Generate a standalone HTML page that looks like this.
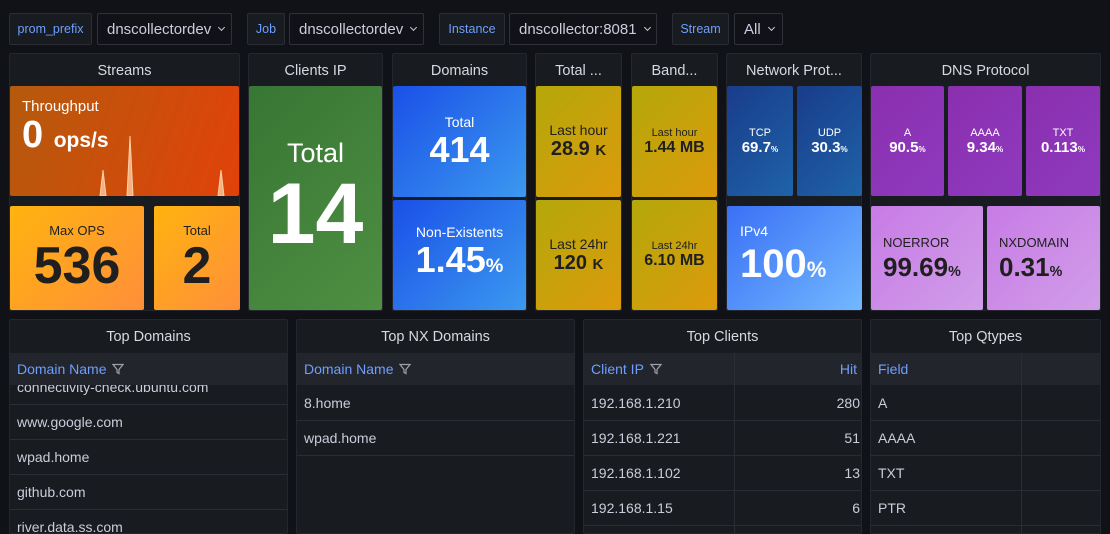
<!DOCTYPE html>
<html><head><meta charset="utf-8"><style>
*{box-sizing:border-box;margin:0;padding:0}
body{width:1110px;height:525px;background:#111217;font-family:"Liberation Sans",sans-serif;color:#ccccdc;position:relative;overflow:hidden}
.a{position:absolute}
.lbl{background:#181b1f;border:1px solid #2a2d33;color:#6e9fff;font-size:12.5px;display:flex;align-items:center;justify-content:center;border-radius:2px}
.dd{background:#111217;border:1px solid #2f323a;color:#ccccdc;font-size:15px;display:flex;align-items:center;padding-left:9px;border-radius:2px}
.dd:after{content:"";width:4px;height:4px;border-right:1.5px solid #ccc;border-bottom:1.5px solid #ccc;transform:rotate(45deg);margin-left:8px;margin-top:-4px}
.pn{background:#181b1f;border:1px solid #24272e;border-radius:2px}
.pt{position:absolute;left:0;right:0;top:0;height:33px;display:flex;align-items:center;justify-content:center;font-size:14.5px;color:#d8d9e0}
.t{position:absolute;border-radius:2px;text-align:center;color:#fff}
.c{display:flex;flex-direction:column;align-items:center;justify-content:center}
.dk{color:#1f1f1f}
small{font-size:0.55em}
.th{position:absolute;left:0;right:0;top:33px;height:32px;background:#22252b;color:#6e9fff;font-size:14px;display:flex;align-items:center;padding-left:7px}
.row{position:absolute;left:0;right:0;height:35px;border-top:1px solid #2a2d33;font-size:14px;color:#ccccdc;display:flex;align-items:center;padding-left:7px}
.fi{display:inline-block;width:12px;height:12px;margin-left:6px;vertical-align:middle}
</style></head><body>
<div class="a lbl" style="left:9px;top:13px;width:83px;height:32px">prom_prefix</div>
<div class="a dd" style="left:97px;top:13px;width:135px;height:32px">dnscollectordev</div>
<div class="a lbl" style="left:247px;top:13px;width:38px;height:32px">Job</div>
<div class="a dd" style="left:289px;top:13px;width:135px;height:32px">dnscollectordev</div>
<div class="a lbl" style="left:439px;top:13px;width:66px;height:32px">Instance</div>
<div class="a dd" style="left:509px;top:13px;width:148px;height:32px">dnscollector:8081</div>
<div class="a lbl" style="left:672px;top:13px;width:57px;height:32px">Stream</div>
<div class="a dd" style="left:734px;top:13px;width:49px;height:32px">All</div>

<div class="a pn" style="left:9px;top:53px;width:231px;height:258px"><div class="pt">Streams</div></div>
<div class="t" style="left:10px;top:86px;width:229px;height:110px;background:linear-gradient(110deg,#b45a0c,#e2420a);text-align:left;overflow:hidden">
<div style="position:absolute;left:12px;top:12px;font-size:15px">Throughput</div>
<div style="position:absolute;left:12px;top:28px;font-size:38px;font-weight:bold">0 <span style="font-size:21px">ops/s</span></div>
<svg class="a" style="left:0;top:0" width="229" height="110"><g fill="#f5b080" stroke="#ffd0a8" stroke-width="1"><path d="M90 110 L93 84 L96 110Z"/><path d="M117 110 L120 50 L123 110Z"/><path d="M208 110 L211 84 L214 110Z"/></g></svg>
</div>
<div class="t c dk" style="left:10px;top:206px;width:134px;height:104px;background:linear-gradient(135deg,#ffb30f,#ff8f3a)"><div style="font-size:13px">Max OPS</div><div style="font-size:52px;font-weight:bold;line-height:56px">536</div></div>
<div class="t c dk" style="left:154px;top:206px;width:86px;height:104px;background:linear-gradient(135deg,#ffb30f,#ff8f3a)"><div style="font-size:13px">Total</div><div style="font-size:52px;font-weight:bold;line-height:56px">2</div></div>

<div class="a pn" style="left:248px;top:53px;width:135px;height:258px"><div class="pt">Clients IP</div></div>
<div class="t c" style="left:249px;top:86px;width:133px;height:224px;background:linear-gradient(135deg,#377634,#4e8f42)"><div style="font-size:27px">Total</div><div style="font-size:86px;font-weight:bold;line-height:90px">14</div></div>

<div class="a pn" style="left:392px;top:53px;width:135px;height:258px"><div class="pt">Domains</div></div>
<div class="t c" style="left:393px;top:86px;width:133px;height:111px;background:linear-gradient(135deg,#1a50e8,#3c99ef)"><div style="font-size:14px">Total</div><div style="font-size:36px;font-weight:bold;line-height:40px">414</div></div>
<div class="t c" style="left:393px;top:200px;width:133px;height:110px;background:linear-gradient(135deg,#1a50e8,#3c99ef)"><div style="font-size:14px">Non-Existents</div><div style="font-size:36px;font-weight:bold;line-height:40px">1.45<small>%</small></div></div>

<div class="a pn" style="left:535px;top:53px;width:87px;height:258px"><div class="pt">Total ...</div></div>
<div class="t c dk" style="left:536px;top:86px;width:85px;height:111px;background:linear-gradient(135deg,#b4a80a,#dc9a0c)"><div style="font-size:14px">Last hour</div><div style="font-size:20px;font-weight:bold">28.9 <span style="font-size:15px">K</span></div></div>
<div class="t c dk" style="left:536px;top:200px;width:85px;height:110px;background:linear-gradient(135deg,#b4a80a,#dc9a0c)"><div style="font-size:14px">Last 24hr</div><div style="font-size:20px;font-weight:bold">120 <span style="font-size:15px">K</span></div></div>

<div class="a pn" style="left:631px;top:53px;width:87px;height:258px"><div class="pt">Band...</div></div>
<div class="t c dk" style="left:632px;top:86px;width:85px;height:111px;background:linear-gradient(135deg,#b4a80a,#dc9a0c)"><div style="font-size:11px">Last hour</div><div style="font-size:16px;font-weight:bold">1.44 MB</div></div>
<div class="t c dk" style="left:632px;top:200px;width:85px;height:110px;background:linear-gradient(135deg,#b4a80a,#dc9a0c)"><div style="font-size:11px">Last 24hr</div><div style="font-size:16px;font-weight:bold">6.10 MB</div></div>

<div class="a pn" style="left:726px;top:53px;width:136px;height:258px"><div class="pt">Network Prot...</div></div>
<div class="t c" style="left:727px;top:86px;width:66px;height:110px;background:linear-gradient(135deg,#193c8a,#1f63a8)"><div style="font-size:11px">TCP</div><div style="font-size:15px;font-weight:bold">69.7<small>%</small></div></div>
<div class="t c" style="left:797px;top:86px;width:65px;height:110px;background:linear-gradient(135deg,#193c8a,#1f63a8)"><div style="font-size:11px">UDP</div><div style="font-size:15px;font-weight:bold">30.3<small>%</small></div></div>
<div class="t" style="left:727px;top:206px;width:135px;height:104px;background:linear-gradient(135deg,#3a70f5,#72b8ff);text-align:left"><div style="position:absolute;left:13px;top:17px;font-size:14px">IPv4</div><div style="position:absolute;left:13px;top:36px;font-size:40px;font-weight:bold">100<small>%</small></div></div>

<div class="a pn" style="left:870px;top:53px;width:231px;height:258px"><div class="pt">DNS Protocol</div></div>
<div class="t c" style="left:871px;top:86px;width:73px;height:110px;background:linear-gradient(135deg,#8a2fae,#8f3abf)"><div style="font-size:11px">A</div><div style="font-size:15px;font-weight:bold">90.5<small>%</small></div></div>
<div class="t c" style="left:948px;top:86px;width:74px;height:110px;background:linear-gradient(135deg,#8a2fae,#8f3abf)"><div style="font-size:11px">AAAA</div><div style="font-size:15px;font-weight:bold">9.34<small>%</small></div></div>
<div class="t c" style="left:1026px;top:86px;width:74px;height:110px;background:linear-gradient(135deg,#8a2fae,#8f3abf)"><div style="font-size:11px">TXT</div><div style="font-size:15px;font-weight:bold">0.113<small>%</small></div></div>
<div class="t dk" style="left:871px;top:206px;width:112px;height:104px;background:linear-gradient(135deg,#c87be6,#d09de8);text-align:left"><div style="position:absolute;left:12px;top:29px;font-size:13px">NOERROR</div><div style="position:absolute;left:12px;top:46px;font-size:26px;font-weight:bold">99.69<small>%</small></div></div>
<div class="t dk" style="left:987px;top:206px;width:113px;height:104px;background:linear-gradient(135deg,#c87be6,#d09de8);text-align:left"><div style="position:absolute;left:12px;top:29px;font-size:13px">NXDOMAIN</div><div style="position:absolute;left:12px;top:46px;font-size:26px;font-weight:bold">0.31<small>%</small></div></div>

<div class="a pn" style="left:9px;top:319px;width:279px;height:215px;overflow:hidden"><div class="pt">Top Domains</div>
<div class="row" style="top:49px;border:none">connectivity-check.ubuntu.com</div>
<div class="th">Domain Name<svg class="fi" viewBox="0 0 12 12"><path d="M1 1.5h10L7 6.5v4L5 9.5v-3Z" fill="none" stroke="#9fa1a8" stroke-width="1.2"/></svg></div>
<div class="row" style="top:84px">www.google.com</div>
<div class="row" style="top:119px">wpad.home</div>
<div class="row" style="top:154px">github.com</div>
<div class="row" style="top:189px">river.data.ss.com</div>
</div>
<div class="a pn" style="left:296px;top:319px;width:279px;height:215px;overflow:hidden"><div class="pt">Top NX Domains</div>
<div class="th">Domain Name<svg class="fi" viewBox="0 0 12 12"><path d="M1 1.5h10L7 6.5v4L5 9.5v-3Z" fill="none" stroke="#9fa1a8" stroke-width="1.2"/></svg></div>
<div class="row" style="top:65px;border:none">8.home</div>
<div class="row" style="top:100px">wpad.home</div>
<div class="row" style="top:135px;height:1px"></div>
</div>
<div class="a pn" style="left:583px;top:319px;width:279px;height:215px;overflow:hidden"><div class="pt">Top Clients</div>
<div class="th">Client IP<svg class="fi" viewBox="0 0 12 12"><path d="M1 1.5h10L7 6.5v4L5 9.5v-3Z" fill="none" stroke="#9fa1a8" stroke-width="1.2"/></svg><span style="position:absolute;right:4px">Hit</span></div>
<div class="a" style="left:150px;top:33px;width:1px;height:190px;background:#2a2d33"></div>
<div class="row" style="top:65px;border-top:none">192.168.1.210<span style="position:absolute;right:1px">280</span></div>
<div class="row" style="top:100px">192.168.1.221<span style="position:absolute;right:1px">51</span></div>
<div class="row" style="top:135px">192.168.1.102<span style="position:absolute;right:1px">13</span></div>
<div class="row" style="top:170px">192.168.1.15<span style="position:absolute;right:1px">6</span></div>
<div class="row" style="top:205px"></div>
</div>
<div class="a pn" style="left:870px;top:319px;width:231px;height:215px;overflow:hidden"><div class="pt">Top Qtypes</div>
<div class="th">Field</div>
<div class="a" style="left:150px;top:33px;width:1px;height:190px;background:#2a2d33"></div>
<div class="row" style="top:65px;border-top:none">A</div>
<div class="row" style="top:100px">AAAA</div>
<div class="row" style="top:135px">TXT</div>
<div class="row" style="top:170px">PTR</div>
<div class="row" style="top:205px"></div>
</div>
</body></html>
